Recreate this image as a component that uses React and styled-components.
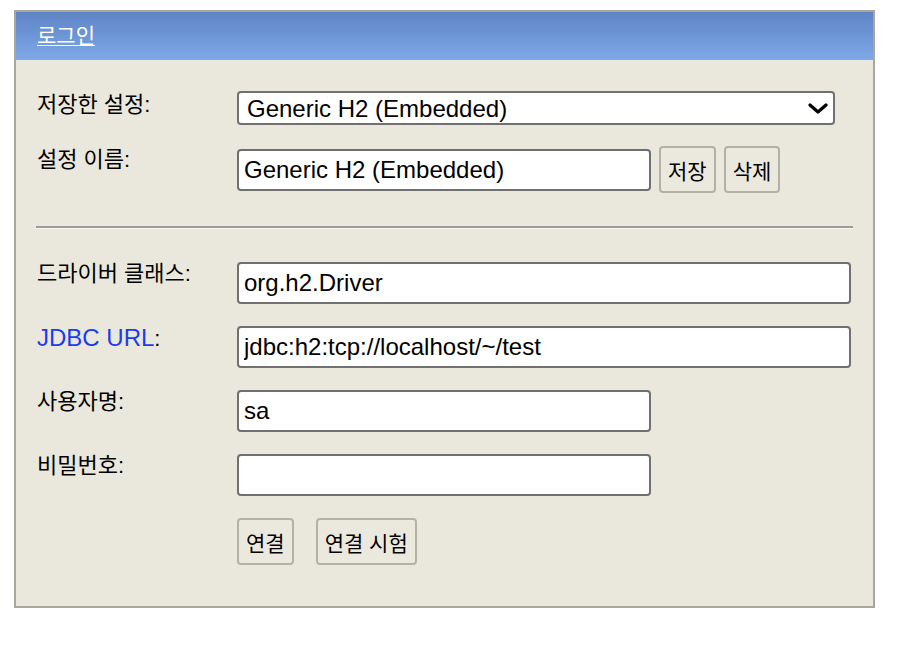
import React from "react";
import styled, { createGlobalStyle } from "styled-components";

const GlobalStyle = createGlobalStyle`
  html, body {
    margin: 0;
    padding: 0;
    background: #ffffff;
    font-family: "Liberation Sans", "Noto Sans CJK KR", sans-serif;
  }
`;

const Page = styled.div`
  padding: 10px 0 0 14px;
`;

const Panel = styled.div`
  box-sizing: border-box;
  width: 861px;
  border: 2px solid #a9a79b;
  background-color: #eae8dc;
`;

const Header = styled.div`
  height: 48px;
  padding: 0 0 4px 21px;
  box-sizing: border-box;
  background: linear-gradient(to bottom, #5f84c5 0%, #6d96d6 50%, #7ea8e8 100%);
  display: flex;
  align-items: center;
`;

const Title = styled.a`
  color: #ffffff;
  font-size: 21px;
  text-decoration: underline;
  text-underline-offset: 2px;
  text-decoration-thickness: 1px;
  cursor: pointer;
`;

const Body = styled.div`
  padding: 31px 21px 41px 21px;
`;

const Section = styled.div`
  display: flex;
  flex-direction: column;
  gap: ${(p) => p.gap}px;
`;

const Row = styled.div`
  display: flex;
  align-items: ${(p) => (p.center ? "center" : "flex-start")};
`;

const Label = styled.div`
  flex: 0 0 200px;
  align-self: flex-start;
  padding-top: ${(p) => p.offset || 0}px;
  font-size: 22px;
  line-height: 24px;
  color: #000;
`;

const LinkText = styled.a`
  color: #1a3cf2;
  font-size: 24px;
  text-decoration: none;
  cursor: pointer;
`;

const Fields = styled.div`
  display: flex;
  align-items: center;
  gap: ${(p) => p.gap || 8}px;
`;

const Input = styled.input`
  box-sizing: border-box;
  width: ${(p) => p.w}px;
  height: 42px;
  border: 2px solid #707070;
  border-radius: 4px;
  padding: 0 5px;
  background: #ffffff;
  font-family: "Liberation Sans", "Noto Sans CJK KR", sans-serif;
  font-size: 24px;
  color: #000;
  outline: none;
`;

const SelectBox = styled.div`
  position: relative;
  width: 598px;
  height: 34px;
`;

const Select = styled.select`
  appearance: none;
  -webkit-appearance: none;
  box-sizing: border-box;
  width: 100%;
  height: 100%;
  border: 2px solid #707070;
  border-radius: 4px;
  padding: 0 40px 0 8px;
  background: #ffffff;
  font-family: "Liberation Sans", "Noto Sans CJK KR", sans-serif;
  font-size: 24px;
  color: #000;
  outline: none;
`;

const Chevron = styled.svg`
  position: absolute;
  right: 7px;
  top: 12px;
  pointer-events: none;
`;

const Button = styled.button`
  box-sizing: border-box;
  height: 47px;
  padding: 0 7px;
  border: 2px solid #b4b2a6;
  border-radius: 4px;
  background: #ebe9de;
  font-family: "Liberation Sans", "Noto Sans CJK KR", sans-serif;
  font-size: 21px;
  color: #000;
  cursor: pointer;
`;

const Divider = styled.hr`
  margin: 33px -1px 33px -1px;
  height: 0;
  border: none;
  border-top: 2px solid #9c9b96;
  border-bottom: 1px solid #f7f7f2;
`;

export default function App() {
  return (
    <Page>
      <GlobalStyle />
      <Panel>
        <Header>
          <Title>로그인</Title>
        </Header>
        <Body>
          <Section gap={21}>
            <Row>
              <Label offset={2}>저장한 설정:</Label>
              <SelectBox>
                <Select defaultValue="h2">
                  <option value="h2">Generic H2 (Embedded)</option>
                </Select>
                <Chevron width="20" height="11" viewBox="0 0 20 11">
                  <path d="M2 2 L10 9 L18 2" fill="none" stroke="#000" strokeWidth="3.2" strokeLinecap="round" strokeLinejoin="round" />
                </Chevron>
              </SelectBox>
            </Row>
            <Row center>
              <Label offset={2}>설정 이름:</Label>
              <Fields gap={8}>
                <Input w={414} defaultValue="Generic H2 (Embedded)" />
                <Button>저장</Button>
                <Button>삭제</Button>
              </Fields>
            </Row>
          </Section>
          <Divider />
          <Section gap={22}>
            <Row>
              <Label>드라이버 클래스:</Label>
              <Input w={614} defaultValue="org.h2.Driver" />
            </Row>
            <Row>
              <Label>
                <LinkText>JDBC URL</LinkText>:
              </Label>
              <Input w={614} defaultValue="jdbc:h2:tcp://localhost/~/test" />
            </Row>
            <Row>
              <Label>사용자명:</Label>
              <Input w={414} defaultValue="sa" />
            </Row>
            <Row>
              <Label>비밀번호:</Label>
              <Input w={414} type="password" defaultValue="" />
            </Row>
            <Row>
              <Label />
              <Fields gap={22}>
                <Button>연결</Button>
                <Button>연결 시험</Button>
              </Fields>
            </Row>
          </Section>
        </Body>
      </Panel>
    </Page>
  );
}
